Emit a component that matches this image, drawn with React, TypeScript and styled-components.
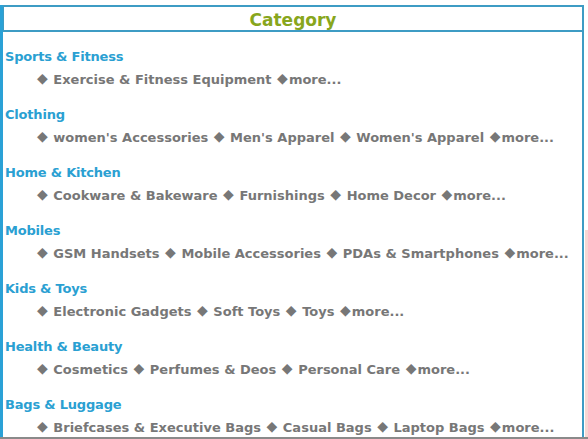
import React from "react";
import styled, { createGlobalStyle } from "styled-components";

const Global = createGlobalStyle`
  html, body { margin: 0; padding: 0; background: #fff; }
  body { font-family: "DejaVu Sans", Verdana, sans-serif; }
`;

const Page = styled.div`
  width: 588px;
  height: 439px;
  overflow: hidden;
  display: flex;
  flex-direction: column;
`;

const Row = styled.div`
  display: flex;
  padding-top: 5px;
  height: 432px;
  border-bottom: 2px solid #8a8a8a;
`;

const Panel = styled.div`
  width: 579px;
  border-left: 3px solid #2aa1d6;
  border-right: 2px solid #3d9cc4;
  display: flex;
  flex-direction: column;
`;

const Side = styled.div`
  width: 4px;
  margin-top: 225px;
  background: linear-gradient(to right, #ffffff 0 1px, #f7d6d2 1px);
`;

const Header = styled.div`
  height: 25px;
  border-top: 2px solid #3d9cc4;
  border-bottom: 2px solid #3d9cc4;
  border-left: 1px solid #3d9cc4;
  display: flex;
  align-items: center;
  justify-content: center;
`;

const Title = styled.h2`
  margin: 0;
  padding-top: 3px;
  font-size: 17px;
  font-weight: bold;
  color: #88a61c;
`;

const List = styled.div`
  padding: 15px 0 0 2px;
  display: flex;
  flex-direction: column;
  gap: 15px;
`;

const Block = styled.div`
  display: flex;
  flex-direction: column;
  gap: 3px;
`;

const Heading = styled.div`
  height: 20px;
  line-height: 20px;
  font-size: 13px;
  font-weight: bold;
  letter-spacing: -0.2px;
  color: #2aa0d2;
  white-space: nowrap;
`;

const Items = styled.div`
  height: 20px;
  line-height: 20px;
  padding-left: 31px;
  font-size: 13px;
  font-weight: bold;
  color: #777;
  white-space: nowrap;
`;

const Diamond = styled.span`
  display: inline-block;
  margin: 0 1px 0 1px;
  font-size: 14px;
  line-height: 1;
  vertical-align: 1px;
  color: #777;
`;

const data: [string, string[]][] = [
  ["Sports & Fitness", ["Exercise & Fitness Equipment"]],
  ["Clothing", ["women's Accessories", "Men's Apparel", "Women's Apparel"]],
  ["Home & Kitchen", ["Cookware & Bakeware", "Furnishings", "Home Decor"]],
  ["Mobiles", ["GSM Handsets", "Mobile Accessories", "PDAs & Smartphones"]],
  ["Kids & Toys", ["Electronic Gadgets", "Soft Toys", "Toys"]],
  ["Health & Beauty", ["Cosmetics", "Perfumes & Deos", "Personal Care"]],
  ["Bags & Luggage", ["Briefcases & Executive Bags", "Casual Bags", "Laptop Bags"]],
];

export default function App() {
  return (
    <>
      <Global />
      <Page>
        <Row>
          <Panel>
            <Header>
              <Title>Category</Title>
            </Header>
            <List>
              {data.map(([name, items]) => (
                <Block key={name}>
                  <Heading>{name}</Heading>
                  <Items>
                    {items.map((it) => (
                      <React.Fragment key={it}>
                        <Diamond>◆</Diamond> {it}{" "}
                      </React.Fragment>
                    ))}
                    <Diamond>◆</Diamond>more...
                  </Items>
                </Block>
              ))}
            </List>
          </Panel>
          <Side />
        </Row>
      </Page>
    </>
  );
}
